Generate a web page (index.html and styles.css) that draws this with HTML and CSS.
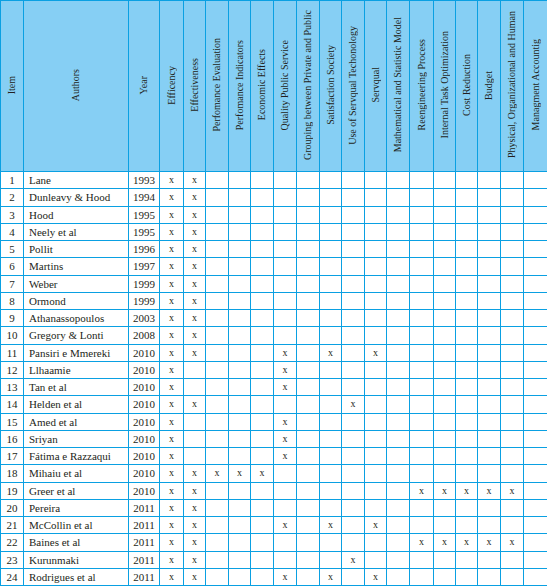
FILE: index.html
```html
<!DOCTYPE html>
<html>
<head>
    <meta charset="UTF-8">
    <title>Literature Review Matrix</title>
    <link rel="stylesheet" href="styles.css">
</head>
<body>
    <div class="sheet">
        <table class="matrix">
            <colgroup>
                <col style="width:23px"><col style="width:105px"><col style="width:31px">
                <col style="width:24px"><col style="width:22px"><col style="width:23px">
                <col style="width:22px"><col style="width:23px"><col style="width:23px">
                <col style="width:23px"><col style="width:22px"><col style="width:23px">
                <col style="width:22px"><col style="width:23px"><col style="width:24px">
                <col style="width:22px"><col style="width:22px"><col style="width:23px">
                <col style="width:23px"><col style="width:25px">
            </colgroup>
            <thead>
                <tr id="headRow"></tr>
            </thead>
            <tbody id="rows"></tbody>
        </table>
    </div>
    <script>
        var headers = ["Item", "Authors", "Year", "Efficency", "Effectiveness",
            "Perfomance Evaluation", "Perfomance Indicators", "Economic Effects",
            "Quality Public Service", "Grouping between Private and Public",
            "Satisfaction Society", "Use of Servqual Techonology", "Servqual",
            "Mathematical and Statistic Model", "Reengineering Process",
            "Internal Task Optimization", "Cost Reduction", "Budget",
            "Physical, Organizational and Human", "Managment Accountig"];

        var data = [
            ["Lane", 1993, [0, 1]],
            ["Dunleavy & Hood", 1994, [0, 1]],
            ["Hood", 1995, [0, 1]],
            ["Neely et al", 1995, [0, 1]],
            ["Pollit", 1996, [0, 1]],
            ["Martins", 1997, [0, 1]],
            ["Weber", 1999, [0, 1]],
            ["Ormond", 1999, [0, 1]],
            ["Athanassopoulos", 2003, [0, 1]],
            ["Gregory & Lonti", 2008, [0, 1]],
            ["Pansiri e Mmereki", 2010, [0, 1, 5, 7, 9]],
            ["Llhaamie", 2010, [0, 5]],
            ["Tan et al", 2010, [0, 5]],
            ["Helden et al", 2010, [0, 1, 8]],
            ["Amed et al", 2010, [0, 5]],
            ["Sriyan", 2010, [0, 5]],
            ["Fátima e Razzaqui", 2010, [0, 5]],
            ["Mihaiu et al", 2010, [0, 1, 2, 3, 4]],
            ["Greer et al", 2010, [0, 1, 11, 12, 13, 14, 15]],
            ["Pereira", 2011, [0, 1]],
            ["McCollin et al", 2011, [0, 1, 5, 7, 9]],
            ["Baines et al", 2011, [0, 1, 11, 12, 13, 14, 15]],
            ["Kurunmaki", 2011, [0, 1, 8]],
            ["Rodrigues et al", 2011, [0, 1, 5, 7, 9]]
        ];

        var headRow = document.getElementById("headRow");
        headers.forEach(function(title) {
            var th = document.createElement("th");
            var span = document.createElement("span");
            span.className = "vert";
            span.textContent = title;
            th.appendChild(span);
            headRow.appendChild(th);
        });

        var body = document.getElementById("rows");
        data.forEach(function(row, i) {
            var tr = document.createElement("tr");
            var html = '<td class="num">' + (i + 1) + '</td>' +
                '<td class="author">' + row[0].replace("&", "&amp;") + '</td>' +
                '<td class="year">' + row[1] + '</td>';
            for (var c = 0; c < 17; c++) {
                html += '<td class="mark">' + (row[2].indexOf(c) > -1 ? "x" : "") + '</td>';
            }
            tr.innerHTML = html;
            body.appendChild(tr);
        });
    </script>
</body>
</html>
```

FILE: styles.css
```css
html, body {
    margin: 0;
    padding: 0;
    background: #ffffff;
}
body {
    font-family: "Liberation Serif", "Times New Roman", serif;
    color: #231f20;
}
.sheet {
    width: 547px;
    height: 586px;
    overflow: hidden;
}
.matrix {
    border-collapse: collapse;
    table-layout: fixed;
    width: 548px;
}
.matrix th,
.matrix td {
    border: 1px solid #0aa0e2;
    padding: 0;
}
.matrix th {
    height: 170px;
    background-color: #86cff4;
    font-weight: normal;
    font-size: 10px;
    text-align: center;
    vertical-align: middle;
}
.vert {
    display: inline-block;
    writing-mode: vertical-rl;
    transform: rotate(180deg);
    white-space: nowrap;
    line-height: 12px;
}
.matrix td {
    height: 16.25px;
    font-size: 11px;
    line-height: 12px;
    text-align: center;
    vertical-align: middle;
    white-space: nowrap;
}
.matrix td.author {
    text-align: left;
    padding-left: 5px;
}
.matrix td.mark {
    font-size: 10px;
}
```
